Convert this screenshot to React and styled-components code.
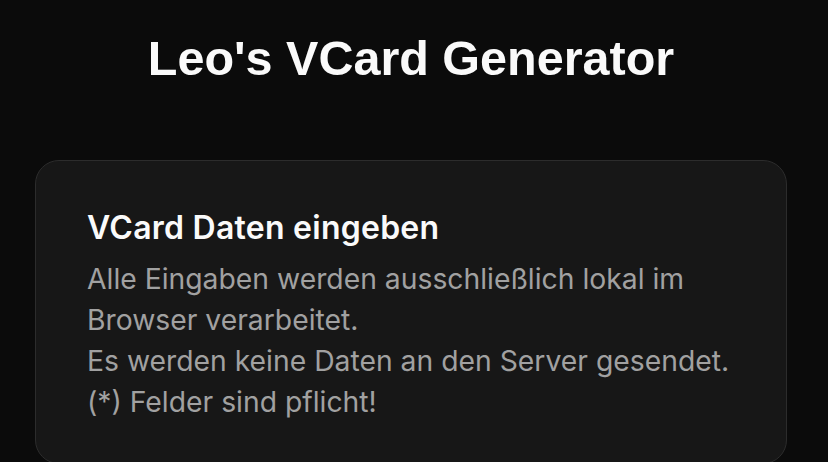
import React from "react";
import styled, { createGlobalStyle } from "styled-components";

const GlobalStyle = createGlobalStyle`
    html, body {
        margin: 0;
        padding: 0;
        background: #0b0b0b;
    }
    body {
        font-family: Inter, "Noto Sans", sans-serif;
        -webkit-font-smoothing: antialiased;
    }
`;

const Page = styled.main`
    min-height: 100vh;
    background: #0b0b0b;
    padding: 28px 41px 0 35px;
    box-sizing: border-box;
    display: flex;
    flex-direction: column;
    align-items: stretch;
`;

const Title = styled.h1`
    margin: 0;
    text-align: center;
    color: #fafafa;
    font-family: "Liberation Sans", Arial, sans-serif;
    font-weight: 700;
    font-size: 48.5px;
    line-height: 60px;
`;

const Card = styled.section`
    margin-top: 72px;
    background: #171717;
    border: 1px solid #2c2c2c;
    border-radius: 24px;
    padding: 47px 51px 40px;
    box-sizing: border-box;
`;

const CardTitle = styled.h2`
    margin: 0;
    color: #fafafa;
    font-size: 32px;
    font-weight: 600;
    line-height: 40px;
    letter-spacing: 0.25px;
`;

const CardText = styled.p`
    margin: 11px 0 0;
    color: #a1a1a1;
    font-size: 28.3px;
    font-weight: 400;
    line-height: 41px;
`;

export default function App() {
    return (
        <>
            <GlobalStyle />
            <Page>
                <Title>Leo's VCard Generator</Title>
                <Card>
                    <CardTitle>VCard Daten eingeben</CardTitle>
                    <CardText>
                        Alle Eingaben werden ausschließlich lokal im Browser
                        verarbeitet.
                        <br />
                        Es werden keine Daten an den Server gesendet.
                        <br />
                        (*) Felder sind pflicht!
                    </CardText>
                </Card>
            </Page>
        </>
    );
}
